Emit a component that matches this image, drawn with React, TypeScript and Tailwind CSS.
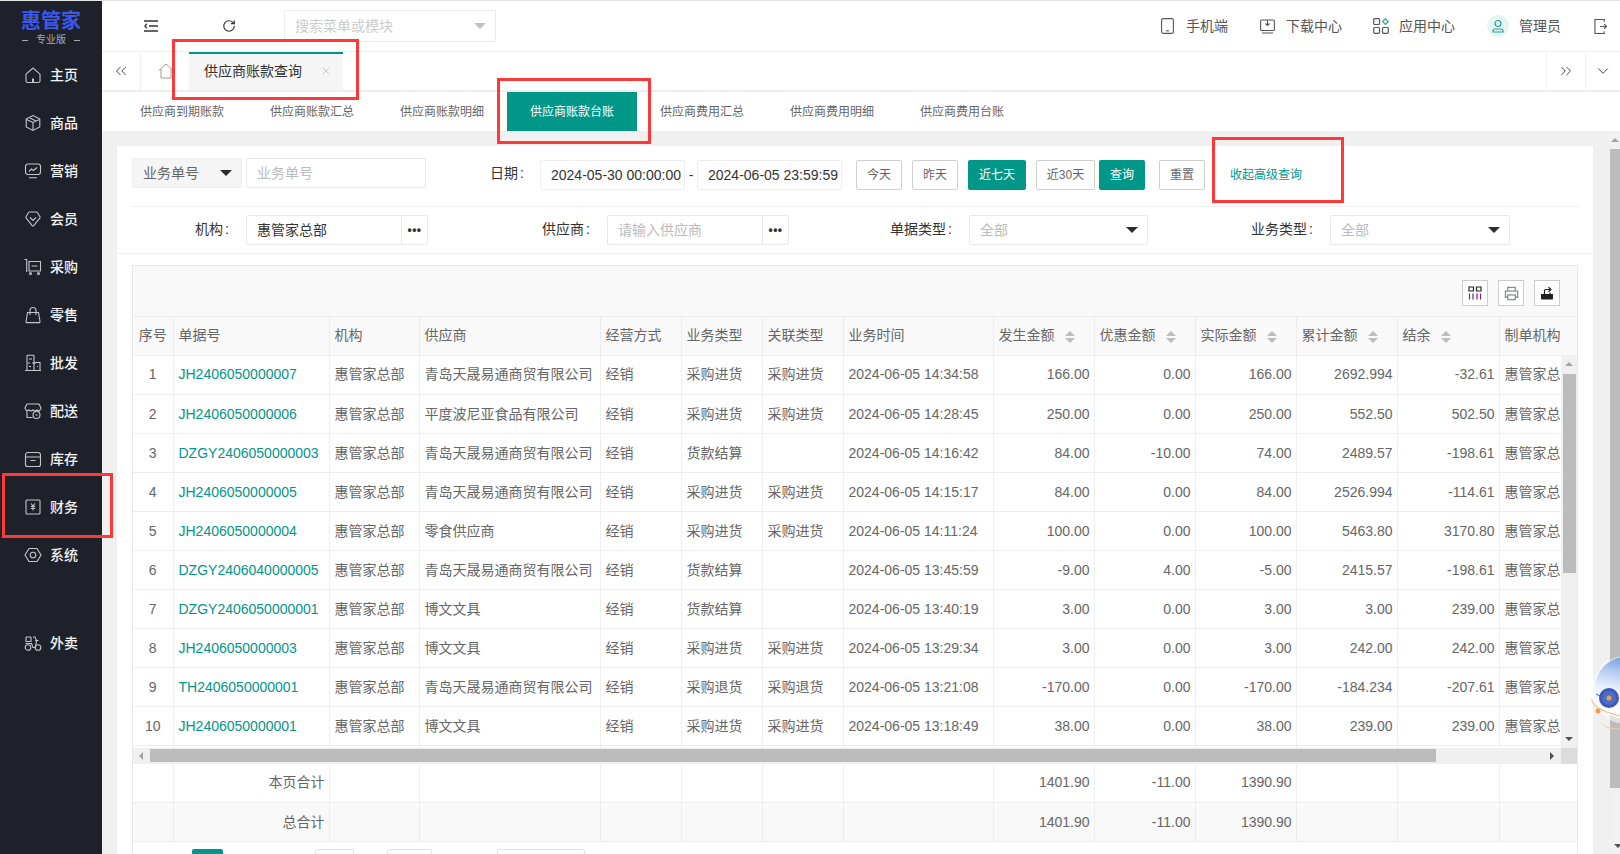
import { ChevronDown, ChevronsLeft, ChevronsRight, RotateCw, X } from "lucide-react"
import type { ReactNode } from "react"

const navIcons: Record<string, ReactNode> = {
  home: (
    <>
      <path d="M2 8.2 9 2l7 6.2V15a1.5 1.5 0 0 1-1.5 1.5h-11A1.5 1.5 0 0 1 2 15z" />
      <path d="M9 12.5v4" strokeWidth="2" />
    </>
  ),
  goods: (
    <>
      <path d="M9 1.5 15.8 5v8L9 16.5 2.2 13V5z" />
      <path d="M2.5 5.5 9 8.5l6.5-3M9 8.5v8M6 4l6 3" />
    </>
  ),
  marketing: (
    <>
      <rect x="1.5" y="2" width="15" height="10.5" rx="2.5" />
      <path d="M5 9.5 7.5 7l2 1.5L13 5.5M5 15.8h8" />
    </>
  ),
  member: (
    <>
      <path d="M5.5 2h7a1 1 0 0 1 .9.5l2.6 4.2a1 1 0 0 1-.1 1.2L9.8 15.6a1 1 0 0 1-1.6 0L2.100 7.900a1 1 0 0 1-.1-1.200l2.600-4.200a1 1 0 0 1 .9-.5z" />
      <path d="M6 7.500 9 10.500l3-3" />
    </>
  ),
  purchase: (
    <>
      <path d="M.5 1.500h2.200v12.500M5 3.500h11.500v9.500H5zM7.500 8h6" />
      <circle cx="6.500" cy="15.500" r="1" />
      <circle cx="14.500" cy="15.500" r="1" />
    </>
  ),
  retail: (
    <>
      <path d="M3.500 6.500h11l1.500 9a1 1 0 0 1-1 1.100H3a1 1 0 0 1-1-1.100z" />
      <path d="M6 9V4.500a3 3 0 0 1 6 0V9" />
    </>
  ),
  wholesale: (
    <>
      <path d="M3 16.500V2a.8.8 0 0 1 .8-.8h5.400a.8.8 0 0 1 .8.8v14.500M10 8.500h6v8M1 16.500h16M5 5h3M4 9h2M8 9h4M13 12.500h1M5 12.500h2" />
    </>
  ),
  delivery: (
    <>
      <path d="M3 2h12l2 4a2.500 2.500 0 0 1-4 2 3 3 0 0 1-4 0 3 3 0 0 1-4 0 2.500 2.500 0 0 1-4-2zM3 9v6.500h5.500M15 9v1" />
      <circle cx="12.500" cy="13" r="3.500" />
      <path d="M11.500 13h2" />
    </>
  ),
  stock: (
    <>
      <path d="M4 2.500h10a2.500 2.500 0 0 1 2.500 2.500v9.500a2 2 0 0 1-2 2h-11a2 2 0 0 1-2-2V5A2.500 2.500 0 0 1 4 2.500zM1.500 7h15M6.500 10.500h5" />
    </>
  ),
  finance: (
    <>
      <rect x="2" y="2" width="14" height="14" rx="1" />
      <path d="M7 5.500 9 8l2-2.500M6.800 8.500h4.400M6.800 10.500h4.400M9 8v4.500" />
    </>
  ),
  system: (
    <>
      <path d="M5 2.500h8L17 9l-4 6.500H5L1 9z" />
      <circle cx="9" cy="9" r="2.800" />
    </>
  ),
  takeout: (
    <>
      <circle cx="4" cy="13.500" r="2.800" />
      <circle cx="14" cy="13.500" r="2.800" />
      <path d="M2 3h5M2 3v4.500h5V3M1.500 9.500h6l1.500 4h2.500l1-7-1.500-3.500h-2M11 6.500h3.500" />
    </>
  ),
}

const navItems = [
  { label: "主页", icon: "home" },
  { label: "商品", icon: "goods" },
  { label: "营销", icon: "marketing" },
  { label: "会员", icon: "member" },
  { label: "采购", icon: "purchase" },
  { label: "零售", icon: "retail" },
  { label: "批发", icon: "wholesale" },
  { label: "配送", icon: "delivery" },
  { label: "库存", icon: "stock" },
  { label: "财务", icon: "finance" },
  { label: "系统", icon: "system" },
]

const subTabs = [
  "供应商到期账款",
  "供应商账款汇总",
  "供应商账款明细",
  "供应商账款台账",
  "供应商费用汇总",
  "供应商费用明细",
  "供应商费用台账",
]

const qd = "青岛天晟易通商贸有限公司"
const wj = "博文文具"
const rows = [
  ["JH2406050000007", qd, "采购进货", "采购进货", "14:34:58", "166.00", "0.00", "166.00", "2692.994", "-32.61"],
  ["JH2406050000006", "平度波尼亚食品有限公司", "采购进货", "采购进货", "14:28:45", "250.00", "0.00", "250.00", "552.50", "502.50"],
  ["DZGY2406050000003", qd, "货款结算", "", "14:16:42", "84.00", "-10.00", "74.00", "2489.57", "-198.61"],
  ["JH2406050000005", qd, "采购进货", "采购进货", "14:15:17", "84.00", "0.00", "84.00", "2526.994", "-114.61"],
  ["JH2406050000004", "零食供应商", "采购进货", "采购进货", "14:11:24", "100.00", "0.00", "100.00", "5463.80", "3170.80"],
  ["DZGY2406040000005", qd, "货款结算", "", "13:45:59", "-9.00", "4.00", "-5.00", "2415.57", "-198.61"],
  ["DZGY2406050000001", wj, "货款结算", "", "13:40:19", "3.00", "0.00", "3.00", "3.00", "239.00"],
  ["JH2406050000003", wj, "采购进货", "采购进货", "13:29:34", "3.00", "0.00", "3.00", "242.00", "242.00"],
  ["TH2406050000001", qd, "采购退货", "采购退货", "13:21:08", "-170.00", "0.00", "-170.00", "-184.234", "-207.61"],
  ["JH2406050000001", wj, "采购进货", "采购进货", "13:18:49", "38.00", "0.00", "38.00", "239.00", "239.00"],
]

const cell = "border-r border-b border-[#eeeeee] pl-[5px] pr-[5px] whitespace-nowrap overflow-hidden"
const numCell = "border-r border-b border-[#eeeeee] pl-[5px] pr-[4px] whitespace-nowrap overflow-hidden text-right"

function Cols({ last }: { last: string }) {
  return (
    <colgroup>
      <col className="w-[40px]" />
      <col className="w-[156px]" />
      <col className="w-[90px]" />
      <col className="w-[181px]" />
      <col className="w-[81px]" />
      <col className="w-[81px]" />
      <col className="w-[81px]" />
      <col className="w-[150px]" />
      <col className="w-[101px]" />
      <col className="w-[101px]" />
      <col className="w-[101px]" />
      <col className="w-[101px]" />
      <col className="w-[102px]" />
      <col className={last} />
    </colgroup>
  )
}

function NavIcon({ name }: { name: string }) {
  return (
    <svg viewBox="0 0 18 18" fill="none" stroke="#c4c6ca" strokeWidth="1.100" className="h-[18px] w-[18px] shrink-0">
      {navIcons[name]}
    </svg>
  )
}

function Caret({ color = "dark" }: { color?: "dark" | "light" }) {
  return (
    <span
      className={
        color === "dark"
          ? "h-0 w-0 border-x-[6px] border-t-[6px] border-x-transparent border-t-[#2b2b2b]"
          : "h-0 w-0 border-x-[6px] border-t-[6px] border-x-transparent border-t-[#c2c2c2]"
      }
    />
  )
}

function Sort() {
  return (
    <span className="ml-[10px] inline-flex flex-col gap-[2px] align-middle">
      <span className="h-0 w-0 border-x-[5px] border-b-[5px] border-x-transparent border-b-[#bdbdbd]" />
      <span className="h-0 w-0 border-x-[5px] border-t-[5px] border-x-transparent border-t-[#bdbdbd]" />
    </span>
  )
}

function OutlineButton({ w, children }: { w: string; children: ReactNode }) {
  return (
    <button className={"flex h-[30px] items-center justify-center rounded-[2px] border border-[#cfcfcf] bg-white text-[12px] text-[#666666] " + w}>
      {children}
    </button>
  )
}

function ToolButton({ children }: { children: ReactNode }) {
  return (
    <button className="flex h-[26px] w-[26px] items-center justify-center border border-[#cccccc] bg-white">
      {children}
    </button>
  )
}

function Label({ w, text }: { w: string; text: string }) {
  return (
    <span className={"text-right leading-[28px] " + w}>
      {text}
      <span className="ml-[2px]">:</span>
    </span>
  )
}

function PickerInput({ value, placeholder }: { value?: string; placeholder?: string }) {
  return (
    <div className="flex h-[30px] w-[182px] items-center rounded-[2px] border border-[#e8e8e8] bg-white text-[14px]">
      <span className={value ? "flex-1 pl-[10px] text-[#333333]" : "flex-1 pl-[10px] text-[#bbbbbb]"}>
        {value ?? placeholder}
      </span>
      <span className="flex h-full w-[26px] items-center justify-center border-l border-[#e8e8e8] text-[12px] font-bold leading-none tracking-[0.5px] text-[#333333]">
        •••
      </span>
    </div>
  )
}

function SelectBox({ w }: { w: string }) {
  return (
    <div className={"flex h-[30px] items-center justify-between rounded-[2px] border border-[#e8e8e8] bg-white pl-[10px] pr-[9px] text-[14px] text-[#bbbbbb] " + w}>
      全部
      <Caret />
    </div>
  )
}

function Sidebar() {
  return (
    <aside className="flex w-[102px] shrink-0 flex-col bg-[#1e212a]">
      <div className="flex h-[50px] flex-col items-center pt-[9px]">
        <div className="text-[20px] font-bold leading-[22px] text-[#3b57ee]">惠管家</div>
        <div className="mt-[2px] flex items-center gap-[8px] text-[10px] leading-[12px] text-[#a8aaae]">
          <span className="h-px w-[6px] bg-[#a8aaae]" />
          专业版
          <span className="h-px w-[6px] bg-[#a8aaae]" />
        </div>
      </div>
      {navItems.map((item) => (
        <div key={item.label} className="flex h-[48px] items-center gap-[8px] pl-[24px] text-[14px] font-medium text-[#f2f2f2]">
          <NavIcon name={item.icon} />
          {item.label}
        </div>
      ))}
      <div className="mt-[40px] flex h-[48px] items-center gap-[8px] pl-[24px] text-[14px] font-medium text-[#f2f2f2]">
        <NavIcon name="takeout" />
        外卖
      </div>
    </aside>
  )
}

function Header() {
  return (
    <header className="flex h-[51px] shrink-0 items-center border-b border-[#f0f0f0] bg-white pl-[42px] pr-[13px] text-[14px] text-[#555555]">
      <svg viewBox="0 0 14 12" fill="none" stroke="#333333" strokeWidth="1.300" className="h-[12px] w-[14px]">
        <path d="M0 1h14M5 6h9M0 11h14M3 3.800 .800 6 3 8.200" />
      </svg>
      <RotateCw size={14} strokeWidth={2} color="#333333" className="ml-[64px]" />
      <div className="ml-[48px] flex h-[32px] w-[212px] items-center justify-between border border-[#ececec] pl-[10px] pr-[9px] text-[#cccccc]">
        搜索菜单或模块
        <Caret color="light" />
      </div>
      <svg viewBox="0 0 13 16" fill="none" stroke="#555555" strokeWidth="1.100" className="ml-auto h-[16px] w-[13px]">
        <rect x=".6" y=".6" width="11.800" height="14.800" rx="1.500" />
        <path d="M5 12.800h3" />
      </svg>
      <span className="ml-[12px]">手机端</span>
      <svg viewBox="0 0 15 15" fill="none" stroke="#555555" strokeWidth="1.100" className="ml-[32px] h-[15px] w-[15px]">
        <rect x=".6" y="1" width="13.800" height="10.500" rx="1" />
        <path d="M7.500 1v5M5.500 4.500 7.500 6.500 9.500 4.500M2 14h11" />
      </svg>
      <span className="ml-[11px]">下载中心</span>
      <svg viewBox="0 0 16 16" fill="none" stroke="#555555" strokeWidth="1.200" className="ml-[31px] h-[16px] w-[16px]">
        <rect x=".7" y=".7" width="5.800" height="5.800" rx="1" />
        <rect x=".7" y="9.500" width="5.800" height="5.800" rx="1" />
        <rect x="9.500" y="9.500" width="5.800" height="5.800" rx="1" />
        <path d="M12.400.8 15.200 3.600 12.400 6.400 9.600 3.600z" stroke="#26a69a" />
      </svg>
      <span className="ml-[10px]">应用中心</span>
      <span className="ml-[32px] flex h-[22px] w-[22px] items-center justify-center rounded-full bg-[#e6f5f3]">
        <svg viewBox="0 0 14 14" fill="none" stroke="#1fa394" strokeWidth="1.200" className="h-[14px] w-[14px]">
          <circle cx="7" cy="4.500" r="3" />
          <path d="M2 13h10v-1a2 2 0 0 0-2-2H4a2 2 0 0 0-2 2z" />
        </svg>
      </span>
      <span className="ml-[10px]">管理员</span>
      <svg viewBox="0 0 14 17" fill="none" stroke="#555555" strokeWidth="1.200" className="ml-[33px] h-[17px] w-[13px]">
        <path d="M11 3.500V1H1v15h10v-2.500M6.500 8.500h7M11 6l2.500 2.500L11 11" />
      </svg>
    </header>
  )
}

function TabBar() {
  return (
    <div className="flex h-[40px] shrink-0 items-stretch border-b-2 border-[#eeeeee] bg-white">
      <div className="flex w-[39px] items-center justify-center border-r border-[#f0f0f0]">
        <ChevronsLeft size={18} strokeWidth={1.200} color="#333333" />
      </div>
      <div className="flex w-[48px] items-center justify-center pl-[2px]">
        <svg viewBox="0 0 16 16" fill="none" stroke="#999999" strokeWidth="1" className="h-[16px] w-[16px]">
          <path d="M.8 7.500 8 1l7.200 6.500M3 6v9h10V6" />
        </svg>
      </div>
      <div className="flex w-[154px] items-center justify-between border-t-2 border-[#009688] bg-[#f5f5f5] pb-[2px] pl-[15px] pr-[11px] text-[14px] text-[#333333]">
        供应商账款查询
        <X size={12} strokeWidth={1.500} color="#bbbbbb" />
      </div>
      <div className="ml-auto flex w-[39px] items-center justify-center border-l border-[#f0f0f0]">
        <ChevronsRight size={18} strokeWidth={1.200} color="#333333" />
      </div>
      <div className="flex w-[35px] items-center justify-center border-l border-[#f0f0f0]">
        <ChevronDown size={18} strokeWidth={1.200} color="#333333" />
      </div>
    </div>
  )
}

function SubTabs() {
  return (
    <div className="flex h-[39px] shrink-0 bg-white pl-[15px]">
      {subTabs.map((t, i) => (
        <div
          key={t}
          className={
            i === 3
              ? "flex w-[130px] items-center justify-center bg-[#009688] text-[12px] text-white"
              : "flex w-[130px] items-center justify-center text-[12px] text-[#666666]"
          }
        >
          {t}
        </div>
      ))}
    </div>
  )
}

function Filters() {
  return (
    <>
      <div className="mx-[15px] flex h-[61px] items-start border-b border-[#eeeeee] pt-[12px] text-[14px]">
        <div className="flex h-[30px] w-[110px] items-center justify-between rounded-[2px] border border-[#eeeeee] bg-[#f5f5f5] pl-[10px] pr-[9px] text-[#666666]">
          业务单号
          <Caret />
        </div>
        <div className="ml-[4px] flex h-[30px] w-[180px] items-center rounded-[2px] border border-[#e8e8e8] pl-[10px] text-[#bbbbbb]">
          业务单号
        </div>
        <span className="ml-[64px] w-[50px] leading-[30px] text-[#333333]">
          日期<span className="ml-[2px]">:</span>
        </span>
        <div className="mt-[2px] flex h-[30px] w-[145px] items-center rounded-[2px] border border-[#eeeeee] pl-[10px] text-[#333333]">
          2024-05-30 00:00:00
        </div>
        <span className="mt-[2px] w-[12px] text-center leading-[30px] text-[#333333]">-</span>
        <div className="mt-[2px] flex h-[30px] w-[145px] items-center rounded-[2px] border border-[#eeeeee] pl-[10px] text-[#333333]">
          2024-06-05 23:59:59
        </div>
        <div className="mt-[2px] ml-[14px] flex items-center">
          <OutlineButton w="w-[46px]">今天</OutlineButton>
          <OutlineButton w="ml-[10px] w-[46px]">昨天</OutlineButton>
          <button className="ml-[10px] flex h-[30px] w-[58px] items-center justify-center rounded-[2px] bg-[#009688] text-[12px] text-white">近七天</button>
          <OutlineButton w="ml-[10px] w-[59px]">近30天</OutlineButton>
          <button className="ml-[4px] flex h-[30px] w-[46px] items-center justify-center rounded-[2px] bg-[#009688] text-[12px] text-white">查询</button>
          <OutlineButton w="ml-[14px] w-[46px]">重置</OutlineButton>
          <span className="ml-[25px] text-[12px] text-[#009688]">收起高级查询</span>
        </div>
      </div>
      <div className="flex h-[47px] items-start border-b border-[#eeeeee] pl-[15px] pt-[8px] text-[14px] text-[#333333]">
        <Label w="w-[97px]" text="机构" />
        <div className="ml-[17px]"><PickerInput value="惠管家总部" /></div>
        <Label w="w-[162px]" text="供应商" />
        <div className="ml-[17px]"><PickerInput placeholder="请输入供应商" /></div>
        <Label w="w-[163px]" text="单据类型" />
        <div className="ml-[17px]"><SelectBox w="w-[179px]" /></div>
        <Label w="w-[165px]" text="业务类型" />
        <div className="ml-[17px]"><SelectBox w="w-[180px]" /></div>
      </div>
    </>
  )
}

function DataTable() {
  return (
    <div className="mx-[15px] mt-[11px] border-x border-t border-[#e8e8e8] text-[14px] text-[#666666]">
      <div className="flex h-[51px] items-start justify-end gap-[10px] border-b border-[#eeeeee] bg-[#f9f9f9] pr-[17px] pt-[14px]">
        <ToolButton>
          <svg viewBox="0 0 14 14" fill="none" stroke="#7b1f7b" strokeWidth="1.200" className="h-[14px] w-[14px]">
            <path d="M1 1h4.500v4H1zM8.500 1H13v4H8.500z" stroke="#222222" />
            <path d="M1.500 7.500v6M5 7.500v6M9 7.500v6M12.500 7.500v6" />
          </svg>
        </ToolButton>
        <ToolButton>
          <svg viewBox="0 0 16 16" fill="none" stroke="#8a8f96" strokeWidth="1.400" className="h-[15px] w-[15px]">
            <path d="M4 5V1.500h8V5M4 12H1.500V5.500h13V12H12" />
            <rect x="4" y="9.500" width="8" height="5" />
          </svg>
        </ToolButton>
        <ToolButton>
          <svg viewBox="0 0 14 14" className="h-[14px] w-[14px]">
            <path d="M1 8h12v4.500a1 1 0 0 1-1 1H2a1 1 0 0 1-1-1z" fill="#222222" />
            <path d="M4.500 8V4.500a1 1 0 0 1 1-1H10M8.500 1.200 11 3.500 8.500 5.800M10 8V6.500" fill="none" stroke="#222222" strokeWidth="1.200" />
          </svg>
        </ToolButton>
      </div>
      <div className="overflow-hidden">
        <table className="w-[1468px] table-fixed">
          <Cols last="w-[102px]" />
          <thead>
            <tr className="h-[38px] bg-[#f9f9f9] text-left font-normal">
              <th className={cell + " text-center font-normal"}>序号</th>
              {["单据号", "机构", "供应商", "经营方式", "业务类型", "关联类型", "业务时间"].map((h) => (
                <th key={h} className={cell + " font-normal"}>{h}</th>
              ))}
              {["发生金额", "优惠金额", "实际金额", "累计金额", "结余"].map((h) => (
                <th key={h} className={cell + " font-normal"}>
                  {h}
                  <Sort />
                </th>
              ))}
              <th className={cell + " font-normal"}>制单机构</th>
            </tr>
          </thead>
        </table>
      </div>
      <div className="flex h-[392px]">
        <div className="w-[1428px] overflow-hidden">
          <table className="w-[1468px] table-fixed">
            <Cols last="w-[102px]" />
            <tbody>
              {rows.map((r, i) => (
                <tr key={r[0]} className="h-[39px]">
                  <td className={cell + " text-center"}>{i + 1}</td>
                  <td className={cell + " text-[#009688]"}>{r[0]}</td>
                  <td className={cell}>惠管家总部</td>
                  <td className={cell}>{r[1]}</td>
                  <td className={cell}>经销</td>
                  <td className={cell}>{r[2]}</td>
                  <td className={cell}>{r[3]}</td>
                  <td className={cell}>2024-06-05 {r[4]}</td>
                  <td className={numCell}>{r[5]}</td>
                  <td className={numCell}>{r[6]}</td>
                  <td className={numCell}>{r[7]}</td>
                  <td className={numCell}>{r[8]}</td>
                  <td className={numCell}>{r[9]}</td>
                  <td className={cell}>惠管家总部</td>
                </tr>
              ))}
              <tr className="h-[39px]">
                {Array.from({ length: 14 }).map((_, i) => (
                  <td key={i} className={cell} />
                ))}
              </tr>
            </tbody>
          </table>
        </div>
        <div className="flex w-[16px] flex-col items-center bg-[#f0f0f0]">
          <span className="mt-[6px] h-0 w-0 border-x-[4px] border-b-[4px] border-x-transparent border-b-[#a3a3a3]" />
          <div className="mt-[8px] h-[199px] w-[13px] bg-[#bcbcbc]" />
          <span className="mt-auto mb-[7px] h-0 w-0 border-x-[4px] border-t-[4px] border-x-transparent border-t-[#505050]" />
        </div>
      </div>
      <div className="flex h-[16px]">
        <div className="flex w-[1428px] items-center bg-[#f0f0f0]">
          <span className="ml-[6px] h-0 w-0 border-y-[4px] border-r-[4px] border-y-transparent border-r-[#a3a3a3]" />
          <div className="ml-[7px] h-[13px] w-[1286px] bg-[#bcbcbc]" />
          <span className="ml-auto mr-[7px] h-0 w-0 border-y-[4px] border-l-[4px] border-y-transparent border-l-[#505050]" />
        </div>
        <div className="w-[16px] bg-[#dcdcdc]" />
      </div>
      <div className="overflow-hidden">
        <table className="w-[1444px] table-fixed">
          <Cols last="w-[78px]" />
          <tbody>
            {[
              { label: "本页合计", bg: "h-[39px] bg-white" },
              { label: "总合计", bg: "h-[39px] bg-[#f9f9f9]" },
            ].map((row) => (
              <tr key={row.label} className={row.bg}>
                <td className={cell} />
                <td className={numCell}>{row.label}</td>
                <td className={cell} />
                <td className={cell} />
                <td className={cell} />
                <td className={cell} />
                <td className={cell} />
                <td className={cell} />
                <td className={numCell}>1401.90</td>
                <td className={numCell}>-11.00</td>
                <td className={numCell}>1390.90</td>
                <td className={cell} />
                <td className={cell} />
                <td className="border-b border-[#eeeeee]" />
              </tr>
            ))}
          </tbody>
        </table>
      </div>
      <div className="flex h-[30px] pl-[59px] pt-[7px] text-[12px]">
        <div className="h-[30px] w-[31px] rounded-[2px] bg-[#009688]" />
        <div className="ml-[92px] h-[30px] w-[39px] rounded-[2px] border border-[#e2e2e2]" />
        <div className="ml-[33px] h-[30px] w-[45px] rounded-[2px] border border-[#e2e2e2]" />
        <div className="ml-[65px] h-[30px] w-[88px] rounded-[2px] border border-[#e2e2e2]" />
      </div>
    </div>
  )
}

function Assistant() {
  return (
    <svg viewBox="0 0 30 80" className="absolute right-0 top-[650px] h-[80px] w-[30px]">
      <defs>
        <linearGradient id="ballFill" x1="0.500" y1="0" x2="0.300" y2="0.900">
          <stop offset="0" stopColor="#6f9be2" />
          <stop offset="0.300" stopColor="#b5cdf2" />
          <stop offset="0.600" stopColor="#eaf1fc" />
          <stop offset="1" stopColor="#ffffff" />
        </linearGradient>
      </defs>
      <circle cx="36" cy="39" r="34" fill="#ffffff" opacity="0.550" />
      <circle cx="36" cy="37" r="31" fill="url(#ballFill)" />
      <path d="M6 43 13 47" stroke="#3c57b3" strokeWidth="1" />
      <circle cx="19" cy="47" r="10" fill="#3e59b5" />
      <circle cx="19" cy="47" r="7" fill="#4f6cc9" />
      <circle cx="19" cy="47" r="2.500" fill="#f0a040" />
      <path d="M2 48c-1 7 12 13 28 17" fill="none" stroke="#f5b26b" strokeWidth="1" />
      <path d="M11 72c4 5 12 6 19 6" fill="none" stroke="#f8cfa0" strokeWidth="1" />
      <circle cx="8" cy="60" r="2.500" fill="#f59a3e" />
    </svg>
  )
}

export default function App() {
  return (
    <div className="relative flex h-[854px] w-[1620px] overflow-hidden border-t border-[#e4e4e4] bg-white font-['Liberation_Sans','Noto_Sans_CJK_SC',sans-serif]">
      <Sidebar />
      <main className="flex min-w-0 flex-1 flex-col">
        <Header />
        <TabBar />
        <SubTabs />
        <div className="flex min-h-0 flex-1">
          <div className="min-w-0 flex-1 overflow-hidden bg-[#f0f0f0] pl-[15px] pr-[17px] pt-[15px]">
            <div className="h-[800px] bg-white">
              <Filters />
              <DataTable />
            </div>
          </div>
          <div className="flex w-[10px] flex-col items-center bg-[#f1f1f1]">
            <span className="mt-[7px] h-0 w-0 border-x-[4px] border-b-[4px] border-x-transparent border-b-[#a3a3a3]" />
            <div className="mt-[7px] h-[639px] w-full bg-[#bcbcbc]" />
            <span className="ml-[6px] mt-auto mb-[6px] h-0 w-0 border-x-[4px] border-t-[4px] border-x-transparent border-t-[#505050]" />
          </div>
        </div>
      </main>
      <Assistant />
      <div className="pointer-events-none absolute left-[172px] top-[38px] h-[61px] w-[187px] border-[3px] border-[#ff3838]" />
      <div className="pointer-events-none absolute left-[497px] top-[77px] h-[66px] w-[154px] border-[3px] border-[#ff3838]" />
      <div className="pointer-events-none absolute left-[1212px] top-[136px] h-[66px] w-[132px] border-[3px] border-[#ff3838]" />
      <div className="pointer-events-none absolute left-[2px] top-[472px] h-[65px] w-[111px] border-[3px] border-[#ff3838]" />
    </div>
  )
}
